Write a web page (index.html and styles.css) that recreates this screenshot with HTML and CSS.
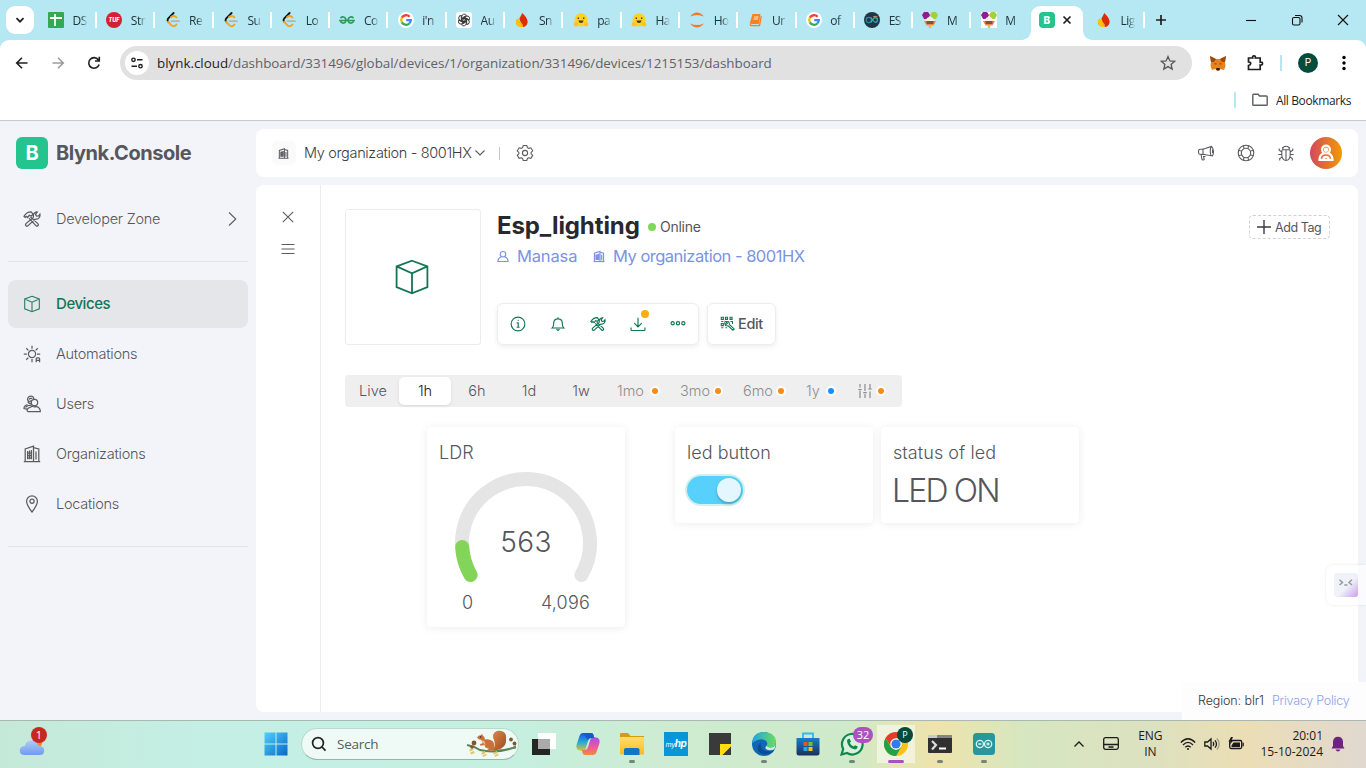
FILE: index.html
```html
<!DOCTYPE html>
<html lang="en">
<head>
<meta charset="utf-8">
<title>Blynk.Console</title>
<link rel="stylesheet" href="styles.css">
</head>
<body>
<svg class="defs" width="0" height="0">
  <defs>
    <linearGradient id="gWin" x1="0" y1="0" x2="1" y2="1"><stop offset="0" stop-color="#52d0fb"/><stop offset="1" stop-color="#0568c9"/></linearGradient>
    <linearGradient id="gEdge" x1="0" y1="0" x2="1" y2="0"><stop offset="0" stop-color="#1fa4e6"/><stop offset="1" stop-color="#6bdc5c"/></linearGradient>
    <linearGradient id="gCopA" x1="0" y1="0" x2="0" y2="1"><stop offset="0" stop-color="#1b55d6"/><stop offset=".5" stop-color="#23a8e0"/><stop offset="1" stop-color="#e8c51f"/></linearGradient>
    <linearGradient id="gCopB" x1="0" y1="0" x2="0" y2="1"><stop offset="0" stop-color="#a052e8"/><stop offset=".55" stop-color="#f0569d"/><stop offset="1" stop-color="#f58a3c"/></linearGradient>
    <linearGradient id="gFold" x1="0" y1="0" x2="0" y2="1"><stop offset="0" stop-color="#ffdc70"/><stop offset="1" stop-color="#fbb91d"/></linearGradient>
    <linearGradient id="gStore" x1="0" y1="0" x2="0" y2="1"><stop offset="0" stop-color="#1380cf"/><stop offset="1" stop-color="#1c2f5a"/></linearGradient>
    <linearGradient id="gCloud" x1="0" y1="0" x2="0" y2="1"><stop offset="0" stop-color="#aecbfa"/><stop offset="1" stop-color="#6f9bee"/></linearGradient>
    <linearGradient id="gTail" x1="0" y1="0" x2="1" y2="1"><stop offset="0" stop-color="#e28a4d"/><stop offset="1" stop-color="#9c4a1e"/></linearGradient>
  </defs>
  <symbol id="leet" viewBox="0 0 16 16"><path d="M8.600 1 3.500 6.200Q1.800 8 3.200 9.800" fill="none" stroke="#111" stroke-width="1.800" stroke-linecap="round"/><path d="M3.200 9.800 6.500 13.400Q8.800 15.400 11.400 12.600M6 5.200Q8.800 2.800 11.400 5.400" fill="none" stroke="#f5a11c" stroke-width="1.900" stroke-linecap="round"/><path d="M6.600 9.200h7.400" stroke="#b3b3b3" stroke-width="1.700" stroke-linecap="round"/></symbol>
  <symbol id="google" viewBox="0 0 16 16"><circle cx="8" cy="8" r="8" fill="#fff"/><g fill="none" stroke-width="2.300"><path d="M11.600 4.800A4.800 4.800 0 0 0 3.900 5.600" stroke="#ea4335"/><path d="M3.900 5.600a4.800 4.800 0 0 0 0 4.800" stroke="#fbbc05"/><path d="M3.900 10.400a4.800 4.800 0 0 0 7.400 1.100" stroke="#34a853"/><path d="M11.300 11.500A4.800 4.800 0 0 0 12.800 8.200H8.200" stroke="#4285f4"/></g></symbol>
  <symbol id="flame" viewBox="0 0 16 16"><path d="M8.300 1C10.600 3.400 14 6.800 13.600 10.400 13.200 13.200 11 15 8.600 15 9.600 11.400 5.800 10.400 5.400 6.400 6.400 4.800 7.600 3 8.300 1Z" fill="#dd2c00"/><path d="M2 10.500C2 8.600 3 7 4 6.400c1 3.600 6 4.600 4.600 8.600C5 15.200 2 13.600 2 10.500Z" fill="#ff9100"/><path d="M2 9.800C2.300 8.200 3 7 4 6.400c.7 3 3.800 4.500 4.300 8.600C5 15 2 13.500 2 9.800Z" fill="#ffc400"/></symbol>
  <symbol id="hug" viewBox="0 0 16 16"><circle cx="8" cy="7.800" r="6.600" fill="#ffd21e"/><circle cx="3" cy="12.300" r="2.300" fill="#ffc41c"/><circle cx="13" cy="12.300" r="2.300" fill="#ffc41c"/><path d="M5.300 5.500v1.500M10.700 5.500v1.500" stroke="#32343d" stroke-width="1.300"/><path d="M5.400 8.400h5.200Q10.200 11 8 11T5.400 8.400" fill="#4a3730"/></symbol>
  <symbol id="moz" viewBox="0 0 16 16"><path d="M0 3 2 0h4l2 3-2 4H2Z" fill="#8f1f86"/><path d="M8 3l2-3h4l2 3-2 4h-4Z" fill="#a5cf3d"/><path d="M3.500 9 5 6l3-1.500L11 6l1.500 3Z" fill="#f7efe6"/><path d="M2 9h12l-2.500 4.500h-7Z" fill="#e98a4b"/><path d="M4.500 9h7v3h-7Z" fill="#8a5033"/><path d="M8 13v3" stroke="#efb84a" stroke-width="2.500"/></symbol>
  <symbol id="cube" viewBox="0 0 18 18"><path d="M9 1.300 16.300 4v9.800L9 16.700 1.700 13.800V4ZM1.700 4 9 7.200 16.300 4M9 7.200v9.500"/></symbol>
  <symbol id="tools" viewBox="0 0 18 18"><path d="M1 6.300Q3.500 1.700 8.200 1.800L10 4.200 8.300 6 6.300 5.300 4.600 7.500 3.200 6.300 2.200 7.300ZM7.600 7 14.800 13.600Q16 15 14.700 15.900 13.500 16.500 12.600 15.400L6 8.200M10.600 7.200 3 13.600Q2 15 3.200 16 4.400 16.700 5.400 15.400L12.200 9M10.600 7.200C9.700 4.500 11.500 1.700 14.300 2L12.500 4.300 13.500 6 15.600 5.800 16.900 4.200C17.500 7.500 15 9.700 12.200 9"/></symbol>
  <symbol id="build" viewBox="0 0 18 18"><path d="M.8 16.600h16.400M2.200 16.600V4L10.500 1.200v15.400M10.500 2.600 15.800 4v12.600M4.600 6v8.200M6.500 5.500v8.700M8.400 5v9.200M13 6.500v8M4 8h5M4 10.500h5M4 13h5"/></symbol>
</svg>

<div class="browser">
  <div class="tabstrip">
    <div class="tabsearch"><svg width="10" height="10" viewBox="0 0 10 10"><path d="M1.500 3.200 5 6.700 8.500 3.200"/></svg></div>
    <div class="tabs">
      <div class="tab"><svg viewBox="0 0 16 16"><rect width="16" height="16" rx="1" fill="#34a853"/><path d="M2 6h12M7 2v12" stroke="#fff" stroke-width="1.800"/></svg><span>DS</span></div>
      <div class="tab"><svg viewBox="0 0 16 16"><circle cx="8" cy="8" r="8" fill="#d61f2f"/><text x="8" y="10.300" class="tuf">TUF</text></svg><span>Str</span></div>
      <div class="tab"><svg><use href="#leet"/></svg><span>Re</span></div>
      <div class="tab"><svg><use href="#leet"/></svg><span>Su</span></div>
      <div class="tab"><svg><use href="#leet"/></svg><span>Lo</span></div>
      <div class="tab"><svg viewBox="0 0 16 16"><path d="M1.500 6Q4 3.800 6.300 6.200 7.800 9 5.600 10.800 2.500 12 1 8.500H15Q13.500 12 10.400 10.800 8.200 9 9.700 6.200 12 3.800 14.500 6" fill="none" stroke="#2f9a55" stroke-width="1.700"/></svg><span>Co</span></div>
      <div class="tab"><svg><use href="#google"/></svg><span>i'n</span></div>
      <div class="tab"><svg viewBox="0 0 16 16"><rect width="16" height="16" rx="3" fill="#fff"/><g fill="none" stroke="#333" stroke-width=".9"><path id="petal" d="M5.800 9.300V4.600a2.500 2.500 0 0 1 4.700-1.200L6.800 5.600V8.600"/><use href="#petal" transform="rotate(60 8 8)"/><use href="#petal" transform="rotate(120 8 8)"/><use href="#petal" transform="rotate(180 8 8)"/><use href="#petal" transform="rotate(240 8 8)"/><use href="#petal" transform="rotate(300 8 8)"/></g></svg><span>Au</span></div>
      <div class="tab"><svg><use href="#flame"/></svg><span>Sn</span></div>
      <div class="tab"><svg><use href="#hug"/></svg><span>pa</span></div>
      <div class="tab"><svg><use href="#hug"/></svg><span>Ha</span></div>
      <div class="tab"><svg viewBox="0 0 16 16"><path d="M1 4.500Q8-3.300 15 4.500 8 1.300 1 4.500ZM1 11.500Q8 19.300 15 11.500 8 14.700 1 11.500Z" fill="#f37726"/></svg><span>Ho</span></div>
      <div class="tab"><svg viewBox="0 0 16 16"><path d="M4.500 2h8L10.800 12H2.800L2 10.500Z" fill="#ff7f1a"/><path d="M13.300 4 11.500 13.700H3.500Q2 13.500 2.200 11.500" fill="none" stroke="#ff7f1a" stroke-width="1.300"/><path d="M6 5h4.500M5.500 7H10" stroke="#fff0df"/></svg><span>Ur</span></div>
      <div class="tab"><svg><use href="#google"/></svg><span>of</span></div>
      <div class="tab"><svg viewBox="0 0 16 16"><circle cx="8" cy="8" r="8" fill="#213544"/><circle cx="4.800" cy="8" r="2.600" fill="none" stroke="#27929b" stroke-width="1.200"/><path d="M7 5.500q3 4.500 4 4.800 2.500 0 2.500-2.300T11 5.700Q9.500 6 7 10.400" fill="none" stroke="#33aeb5" stroke-width="1.200"/><path d="M9 5q2-1.500 4.500 0" stroke="#c99c50" fill="none"/></svg><span>ES</span></div>
      <div class="tab"><svg><use href="#moz"/></svg><span>M</span></div>
      <div class="tab last"><svg viewBox="0 0 16 16"><rect width="16" height="16" fill="#fff"/><use href="#moz"/></svg><span>M</span></div>
    </div>
    <div class="tab-active"><div class="bmini">B</div><svg width="10" height="10" viewBox="0 0 10 10"><path d="M1.500 1.500 8.500 8.500M8.500 1.500 1.500 8.500"/></svg></div>
    <div class="tab after"><svg><use href="#flame"/></svg><span>Lig</span></div>
    <svg class="plus" width="12" height="12" viewBox="0 0 12 12"><path d="M6 1v10M1 6h10"/></svg>
    <div class="winctl">
      <svg width="12" height="12" viewBox="0 0 12 12"><path d="M1 6.500h10"/></svg>
      <svg width="12" height="12" viewBox="0 0 12 12"><rect x="1.500" y="3.500" width="7.500" height="7.500" rx="1.500"/><path d="M4 1.500h4.500Q11 1.500 11 4v4.500"/></svg>
      <svg width="12" height="12" viewBox="0 0 12 12"><path d="M1 1 11 11M11 1 1 11"/></svg>
    </div>
  </div>
  <div class="chrome">
    <div class="toolbar">
      <svg class="nav" viewBox="0 0 16 16"><path d="M13.500 8H3M8 2.700 2.700 8 8 13.300"/></svg>
      <svg class="nav dim" viewBox="0 0 16 16"><path d="M2.500 8H13M8 2.700 13.300 8 8 13.300"/></svg>
      <svg class="nav" viewBox="0 0 16 16"><path d="M13.100 9.500A5.300 5.300 0 1 1 12.300 4.800L13.300 6M13.300 1.800V6H9"/></svg>
      <div class="omni">
        <div class="tune"><svg width="14" height="14" viewBox="0 0 14 14"><circle cx="3.500" cy="3.800" r="1.700"/><path d="M7 3.800h5.500M1.500 10.200H7"/><circle cx="10.500" cy="10.200" r="1.700"/></svg></div>
        <div class="url"><b>blynk.cloud</b>/dashboard/331496/global/devices/1/organization/331496/devices/1215153/dashboard</div>
        <svg class="star" width="16" height="16" viewBox="0 0 16 16"><path d="M8 1.500 9.900 5.900 14.700 6.300 11.100 9.400 12.200 14.100 8 11.600 3.800 14.100 4.900 9.400 1.300 6.300 6.100 5.900Z"/></svg>
      </div>
      <svg class="fox" width="18" height="16" viewBox="0 0 18 16"><path d="M1 1 7 4h4l6-3-1 6 .5 4-1.500 4-3.500-1-1 1.500h-3L6.500 14 3 15l-1.500-4L2 7Z" fill="#e8821e"/><path d="M1 1 7 4 5 7H2ZM17 1 11 4l2 3h3Z" fill="#9a4a14"/><path d="M7 14.300 7.500 13h3l.5 1.300-1 1.200h-2Z" fill="#2a2019"/><path d="M5.500 8.800h2M10.500 8.800h2" stroke="#7a5030" stroke-width="1.200"/></svg>
      <svg class="puzzle" width="18" height="18" viewBox="0 0 18 18"><path d="M2.500 4h4.200Q6.200 1.800 8 1.800T9.300 4h4.900v4.200Q16.500 7.800 16.500 9.500T14.200 11v4.500H2.500v-4Q4.700 11 4.700 9.500T2.500 8Z"/></svg>
      <i class="sep"></i>
      <div class="pfp">P</div>
      <svg class="dots" width="4" height="16" viewBox="0 0 4 16"><circle cx="2" cy="2.500" r="1.700"/><circle cx="2" cy="8" r="1.700"/><circle cx="2" cy="13.500" r="1.700"/></svg>
    </div>
    <div class="bookmarks"><i class="sep"></i><svg width="16" height="14" viewBox="0 0 16 14"><path d="M.8 2Q.8 1.200 1.600 1.200H6L7.500 3h6.900q.8 0 .8.800v7.600q0 .8-.8.800H1.600q-.8 0-.8-.8Z"/></svg><span>All Bookmarks</span></div>
  </div>
</div>

<div class="page">
  <aside class="side">
    <div class="brand"><div class="logo">B</div><span>Blynk.Console</span></div>
    <div class="item dev"><svg class="ic"><use href="#tools"/></svg><span>Developer Zone</span><svg class="chev" width="9" height="16" viewBox="0 0 9 16"><path d="M1 1.500 7.800 8 1 14.500"/></svg></div>
    <hr>
    <nav>
      <div class="item on"><svg class="ic"><use href="#cube"/></svg><span>Devices</span></div>
      <div class="item"><svg class="ic" viewBox="0 0 18 18"><circle cx="9" cy="9" r="3.600"/><path d="M9 .8v3M9 14v3.200M.8 9h3M14 9h3.200M3.200 3.200l2.200 2.200M14.800 3.200l-2.200 2.200M3.200 14.800l2.200-2.200M13.200 17.200v-3.500q0-.9.900-.9h1.600q.9 0 .9.900v3.500M13.200 15.300h3.400"/></svg><span>Automations</span></div>
      <div class="item"><svg class="ic" viewBox="0 0 18 18"><circle cx="11.500" cy="7.500" r="3.200"/><path d="M8.800 5.500Q5.500 7.500 4.500 4.500 5 1.200 8 1.200 10.500 1.200 11 4.200M6 4.500Q7 2.800 9.300 3.700M8.300 8.500Q5 8.500 5 6.500M4.500 9.500Q1 10.500 1 13.500L4 14.200M2.500 12.500Q4 10.200 8.800 10.200M5 16.700Q3 15 5.200 13.200L9.500 11.200Q11.500 12.500 13.500 11.400 17.500 13 17.300 16.700Z"/></svg><span>Users</span></div>
      <div class="item"><svg class="ic"><use href="#build"/></svg><span>Organizations</span></div>
      <div class="item"><svg class="ic" viewBox="0 0 18 18"><path d="M9 17Q3.600 10 3.600 6.300A5.400 5.400 0 0 1 14.400 6.300Q14.400 10 9 17Z"/><circle cx="9" cy="6.200" r="2.100"/></svg><span>Locations</span></div>
    </nav>
    <hr>
  </aside>
  <main class="main">
    <header class="top">
      <div class="orgic"><svg width="11" height="11" viewBox="0 0 18 18"><use href="#build"/></svg></div>
      <span class="org">My organization - 8001HX</span>
      <svg class="down" width="10" height="8" viewBox="0 0 10 8"><path d="M.5 1.500 5 6 9.500 1.500"/></svg>
      <i class="vbar"></i>
      <svg class="gear" width="18" height="18" viewBox="0 0 18 18"><path d="M7.200 1.500h3.600l.6 2.200 1.300.7 2.200-.6 1.800 3-1.600 1.600v1.400l1.600 1.600-1.800 3-2.200-.6-1.300.7-.6 2H7.200l-.6-2-1.300-.7-2.200.6-1.800-3 1.600-1.600V8.400L1.300 6.800l1.800-3 2.200.6 1.300-.7Z"/><circle cx="9" cy="9" r="2.600"/></svg>
      <div class="acts">
        <svg viewBox="0 0 18 18"><path d="M2 5.500 6 5v5.500L2 10Q1 7.500 2 5.500M6 5.200 14.500 2.500Q18 6 15.500 12L6 10.300M14 2.800q-1.500 4 0 9M4 10.500 5 15.500Q6.500 16.500 7.300 15.300L6.500 12.500H8.500M15.500 5.500v3.500"/></svg>
        <svg viewBox="0 0 18 18"><circle cx="9" cy="9" r="7.800"/><circle cx="9" cy="9" r="4.700"/><path d="M6.500 1.800 7 4.700M11.500 1.800 11 4.700M6.500 16.200 7 13.300M11.500 16.200 11 13.300M1.800 6.500 4.700 7M1.800 11.500 4.700 11M16.200 6.500 13.300 7M16.200 11.500 13.300 11"/></svg>
        <svg viewBox="0 0 18 18"><path d="M5.800 5.500Q5.500 2.300 9 2.300T12.200 5.500M4.800 7Q4.800 5.700 6 5.700h6q1.200 0 1.200 1.300v4.500Q12.500 16.300 9 16.500 5.500 16.300 4.800 11.500ZM9 5.700V16.500M5 3.500 6.500 4.300M13 3.500 11.500 4.300M4.800 8 2.200 6.200V4.500M13.200 8 15.800 6.200V4.500M4.800 10.500H1.300M13.200 10.500h3.500M5.200 13 2.700 14.600V16.500M12.800 13l2.500 1.600V16.500"/></svg>
        <div class="avatar"><svg width="18" height="18" viewBox="0 0 18 18"><circle cx="9" cy="5.600" r="3.900"/><circle cx="9" cy="5.800" r="1.200"/><path d="M6.500 9.500Q2.500 11 2.500 15.800H15.500Q15.500 11 11.500 9.500M6.500 15q0-2.200 2.500-2.200t2.500 2.200"/></svg></div>
      </div>
    </header>
    <section class="body">
      <div class="rail">
        <svg width="14" height="14" viewBox="0 0 14 14"><path d="M1.800 1.800 12.200 12.200M12.200 1.800 1.800 12.200"/></svg>
        <svg width="14" height="14" viewBox="0 0 14 14"><path d="M.5 2.500h13M.5 7h13M.5 11.500h13"/></svg>
      </div>
      <div class="device">
        <div class="head">
          <div class="thumb"><svg width="38" height="38"><use href="#cube"/></svg></div>
          <div class="info">
            <div class="title"><h1>Esp_lighting</h1><i></i><span>Online</span></div>
            <div class="links">
              <svg viewBox="0 0 14 14"><circle cx="7" cy="4.300" r="3.200"/><path d="M5 7.200Q1 9 1 12.800H13Q13 9 9 7.200"/></svg><span class="who">Manasa</span>
              <svg class="bl" viewBox="0 0 18 18"><use href="#build"/></svg><span>My organization - 8001HX</span>
            </div>
            <div class="btns">
              <div class="group">
                <svg viewBox="0 0 18 18"><circle cx="9" cy="9" r="7.700"/><path d="M7.500 7.700H9.200V12.500M7.500 12.700h3.300M8.700 5h1"/></svg>
                <svg viewBox="0 0 18 18"><path d="M2.500 13.500Q4.200 12 4.200 8 4.200 3.200 9 3.200T13.800 8Q13.800 12 15.500 13.500ZM7.500 14.500Q8 16.200 9 16.200T10.500 14.500M9 3V1.300"/></svg>
                <svg><use href="#tools"/></svg>
                <div class="dl"><svg viewBox="0 0 18 18"><path d="M9 2v10M4.800 8 9 12.200 13.200 8M1.200 13v2.500q0 .8.800.8h14q.8 0 .8-.8V13"/></svg><i></i></div>
                <svg viewBox="0 0 18 18"><circle cx="3" cy="8.200" r="1.800"/><circle cx="9" cy="8.200" r="1.800"/><circle cx="15" cy="8.200" r="1.800"/></svg>
              </div>
              <div class="edit"><svg viewBox="0 0 18 18"><path d="M1.500 1.500h2.500v2.500H1.500ZM6.500 1.500H9v2.500H6.500ZM12 1.500h2.500v2.500H12ZM1.500 6.500H4M1.500 9H4v2.500H1.500ZM1.500 14H4M6.500 14h2M12.500 6.500h2.500v3M6.500 6.500l4 .5 1 3.500 5.500 5-1.500 1.500-5.500-5-3.500-.5-.8-3 2 1.500 1.200-1.200Z"/></svg><span>Edit</span></div>
            </div>
          </div>
          <div class="addtag"><svg width="14" height="14" viewBox="0 0 14 14"><path d="M7 0v14M0 7h14"/></svg><span>Add Tag</span></div>
        </div>
        <div class="ranges">
          <span class="r live">Live</span><span class="r sel">1h</span><span class="r">6h</span><span class="r">1d</span><span class="r">1w</span>
          <span class="r pro mo">1mo<i></i></span><span class="r pro mo">3mo<i></i></span><span class="r pro mo">6mo<i></i></span><span class="r pro yr">1y<i class="blue"></i></span>
          <span class="r pro cus"><svg width="14" height="14" viewBox="0 0 14 14"><path d="M2 0v3.500M2 6.500V14M7 0v7M7 10v4M12 0v4.500M12 7.500V14M.3 5.500h3.400M5.300 8.700h3.400M10.300 5h3.400"/></svg><i></i></span>
        </div>
        <div class="widgets">
          <div class="w gauge">
            <h2>LDR</h2>
            <svg width="144" height="114" viewBox="0 0 144 114"><path d="M16.600 104A64 64 0 1 1 127.400 104" class="track"/><path d="M16.600 104A64 64 0 0 1 8.200 76" class="fill"/></svg>
            <div class="val">563</div>
            <div class="lims"><span>0</span><span>4,096</span></div>
          </div>
          <div class="w btn"><h2>led button</h2><div class="switch"><i></i></div></div>
          <div class="w stat"><h2>status of led</h2><div class="big">LED ON</div></div>
        </div>
      </div>
    </section>
  </main>
  <div class="bot"><div><svg width="16" height="8" viewBox="0 0 16 8"><path d="M1.500.8 4.500 3.500 1.500 6M14 .8 11 3.500 14 6M6.300 6h3.200"/></svg></div></div>
  <footer class="foot"><span>Region: blr1</span><a>Privacy Policy</a></footer>
</div>

<div class="taskbar">
  <div class="weather"><svg width="26" height="22" viewBox="0 0 26 22"><circle cx="18" cy="9" r="5" fill="#f38a1f"/><path d="M6 21Q.8 21 .8 16.500T6 12Q7 6.500 12.500 6.500T19 11.500Q25.200 11.800 25.200 16.500T20 21Z" fill="url(#gCloud)"/></svg><b>1</b></div>
  <svg class="win" width="24" height="24" viewBox="0 0 24 24"><path d="M.5.500h11v11H.5ZM12.500.500h11v11h-11ZM.5 12.500h11v11H.5ZM12.500 12.500h11v11h-11Z" fill="url(#gWin)"/></svg>
  <div class="search"><svg width="16" height="16" viewBox="0 0 16 16"><circle cx="7" cy="7" r="5.400"/><path d="M11 11 14.500 14.700"/></svg><span>Search</span>
    <svg class="squirrel" width="52" height="28" viewBox="0 0 52 28"><path d="M1 15Q8 16 14 20 30 24 50 17" fill="none" stroke="#5b8453" stroke-width="2"/><path d="M25 21 50 18.500V15Q44 20 36 19Z" fill="#5d8f62"/><path d="M5 19l2 5M17 22l2 4M29 22l2 4" stroke="#e3c463" stroke-width="4" stroke-dasharray="2 1"/><path d="M25 20C30 18 29 14 28 10 26 6 27 2 32 .8 38 0 41 4 40 9 41 15 36 20 28 20.500Z" fill="url(#gTail)"/><path d="M11 7.500Q12.500 5 15 5.300L16 3.800 17 5.800Q19.500 8 18.500 9.500 23 8.500 26.500 11 30 15 27 20.500H20.500L23 18.500Q19 18.500 18.500 15L14.500 15.800 14 14.300 17 13Q15.500 11.500 15.500 10 12 9.800 11 7.500Z" fill="#c9713a"/><path d="M15.500 10 18.500 11.500 19.500 15.500 17.500 13Z" fill="#f3c9a0"/><circle cx="14.600" cy="7" r=".7" fill="#222"/><g fill="#80552f"><circle cx="8" cy="13" r="2.400"/><circle cx="6" cy="17" r="1.800"/><circle cx="45" cy="9.500" r="1.900"/><circle cx="48.500" cy="13.500" r="1.900"/></g></svg>
  </div>
  <div class="apps">
    <div><svg viewBox="0 0 24 24"><rect x="0" y="7" width="18" height="16" fill="#252525"/><rect x="6" y="1" width="18" height="16" fill="#fff"/><rect x="6" y="7" width="12" height="10" fill="#aaa"/></svg></div>
    <div><svg viewBox="0 0 24 24"><path d="M7 1h8Q17 1 17.500 3L18 6h-3Q13 6 12 9L9.500 17Q8.500 20 6 19L2 18Q-.5 16 .8 12L3.500 4Q4.500 1 7 1Z" fill="url(#gCopA)"/><path d="M17 23H9Q7 23 6.500 21L6 18h3q2 0 3-3l2.500-8q1-2 3.500-2l4 1q2.500 2 1.200 6L20.500 20q-1 3-3.500 3Z" fill="url(#gCopB)"/><path d="M7 1h8Q17 1 17.500 3L18 6h-3Q12.500 6 12 8Z" fill="#1957c8"/></svg></div>
    <div class="run"><svg viewBox="0 0 24 24"><path d="M0 2Q0 1 1 1h7l2.500 3H24v10H0Z" fill="#d99c09"/><rect x="0" y="5" width="24" height="17.500" rx="1" fill="url(#gFold)"/><path d="M4 23v-5q0-2 2-2h11.500q2 0 2 2v5Z" fill="#1273c9"/></svg></div>
    <div><span class="hp">my<b>hp</b></span></div>
    <div><svg viewBox="0 0 24 24"><path d="M1 1h22v22H1Z" fill="#3a3a3a"/><path d="M23 12v3l-8 8h-3V12Z" fill="#ffdc13"/><path d="M23 14.500 14.500 23H23Z" fill="#3a3a3a"/></svg></div>
    <div class="run"><svg viewBox="0 0 24 24"><circle cx="12" cy="12" r="12" fill="#1267b4"/><path d="M0 11Q1 0 12 0 24 1 24 10.500 23.500 15 18.500 15.500 14.500 15.300 14.500 13.700 16.500 11 13.500 8.500 8.500 5 0 11Z" fill="url(#gEdge)"/><path d="M9 10.500Q7.500 20 18.500 19.500 20.500 19.300 22.300 18 17 24.300 9 21.500 2 17 9 10.500Z" fill="#0d4b98"/><path d="M14.700 13.800Q11.500 16.500 16 18 20 18.800 22.500 17.300L23.800 12Q22 15.500 18.500 15.500 15 15.500 14.700 13.800Z" fill="#d1eccd"/></svg></div>
    <div><svg viewBox="0 0 24 24"><path d="M7 7V1.500h10V7" fill="none" stroke="#39b7e9" stroke-width="1.800"/><path d="M.5 6h23v15q0 2.500-2.500 2.500H3Q.5 23.500.5 21Z" fill="url(#gStore)"/><path d="M7.500 10h4v4h-4Z" fill="#ef5125"/><path d="M12.500 10h4v4h-4Z" fill="#80bd2b"/><path d="M7.500 15h4v4h-4Z" fill="#2aa6e2"/><path d="M12.500 15h4v4h-4Z" fill="#fdbc13"/></svg></div>
    <div class="run"><svg viewBox="0 0 24 24"><path d="M1.500 22.500 3.200 17A10.300 10.300 0 1 1 7 21Z" fill="#d8f1dc" stroke="#12864f" stroke-width="2.200"/><path d="M8 7 9.600 6.700 11 9.600 9.800 11Q11 13.700 13.800 14.500L15 13.300 17.700 14.600Q17.600 17 15.200 17.400 8 16.300 7 9.200 7 7.800 8 7Z" fill="#12864f"/></svg><b class="b32">32</b></div>
    <div class="run cur"><svg viewBox="0 0 24 24"><circle cx="12" cy="12" r="12" fill="#fbc116"/><path d="M12 0A12 12 0 0 1 22.400 6H12L7 14.500 1.600 6A12 12 0 0 1 12 0Z" fill="#e33b2e"/><path d="M1.600 6A12 12 0 0 0 12 24L17.200 15 12 18 6.800 15Z" fill="#24a148"/><circle cx="12" cy="12" r="5.800" fill="#fff"/><circle cx="12" cy="12" r="4.600" fill="#327bea"/></svg><b class="bp">P</b></div>
    <div class="run"><svg viewBox="0 0 24 24"><rect x="0" y="3" width="24" height="18" rx="1" fill="#303030"/><path d="M0 3h24v3H0Z" fill="#858585"/><path d="M0 3h9v3H0Z" fill="#c9c9c9"/><path d="M4 9l4 4-4 4.500" fill="none" stroke="#ddd" stroke-width="2.200"/><path d="M11 16.500h7" stroke="#fff" stroke-width="2"/></svg></div>
    <div class="run"><svg viewBox="0 0 24 24"><rect x="1" y="1" width="22" height="22" rx="3.500" fill="#27979b"/><g fill="none" stroke="#d9f3f3" stroke-width="1.300"><circle cx="7.900" cy="12" r="3.600"/><circle cx="16.100" cy="12" r="3.600"/><path d="M6.300 12h3M14.500 12h3M16 10.500v3"/></g></svg></div>
  </div>
  <div class="tray">
    <svg class="up" width="12" height="8" viewBox="0 0 12 8"><path d="M1.500 6.500 6 2l4.500 4.500"/></svg>
    <svg class="kb" width="16" height="13" viewBox="0 0 16 13"><rect x=".7" y=".7" width="14.600" height="11.600" rx="1.800"/><path d="M1 7.500h14M5.500 10h5"/></svg>
    <div class="lang">ENG<br>IN</div>
    <svg width="16" height="14" viewBox="0 0 16 14"><path d="M.8 5.500Q8-2 15.200 5.500M3 8Q8 2.800 13 8M5.300 10.300Q8 7.600 10.700 10.300"/><circle cx="8" cy="12" r="1" class="f"/></svg>
    <svg width="16" height="14" viewBox="0 0 16 14"><path d="M.8 5v4H3.500L7 12V2L3.500 5ZM9 5q1.500 2 0 4M11 3.300q3 3.700 0 7.400"/><path d="M13 1.500q4.300 5.500 0 11" opacity=".35"/></svg>
    <svg width="16" height="14" viewBox="0 0 16 14"><rect x="1.700" y="3.500" width="12" height="8" rx="1.500"/><path class="f" d="M5.500 5.500h6.500v4.500H3.500V8.500ZM14.500 5.800h1.300v3.400H14.500Z"/><path class="f" d="M3 0 .5 4.500H2.500L2 7.500 5.500 3H3.700L5 0Z"/></svg>
    <div class="clock">20:01<br>15-10-2024</div>
    <svg class="bell" width="14" height="16" viewBox="0 0 14 16"><path d="M.5 12.500 2 10V5.500Q2.500.8 7 .8T12 5.500V10l1.500 2.500ZM4.500 13.500h5Q8.500 15.500 7 15.500T4.500 13.500Z"/></svg>
  </div>
</div>
</body>
</html>
```
FILE: styles.css
```css
* { box-sizing: border-box; }
body { margin: 0; width: 1366px; height: 768px; overflow: hidden; display: flex; flex-direction: column; font-family: Inter, "Liberation Sans", sans-serif; color: #55565b; }
.defs { position: absolute; }
svg { flex: none; display: block; }
h1, h2 { margin: 0; }

/* Browser frame */
.browser { height: 121px; background: #b5e8f3; font-family: "Open Sans", "Noto Sans", sans-serif; color: #1f1f1f; }
.tabstrip { height: 40px; display: flex; align-items: center; padding-left: 6px; }
.tabsearch { width: 28px; height: 28px; border-radius: 9px; background: #fff; display: grid; place-items: center; }
.tabsearch svg, .tab-active svg, .plus { fill: none; stroke: #1f1f1f; stroke-width: 1.7; }
.tabs { display: flex; margin-left: 14px; }
.tab { width: 58.3px; height: 16px; display: flex; align-items: center; flex: none; }
.tab > svg { width: 16px; height: 16px; }
.tab span { width: 16px; margin: 1px 6.500px 0 8.500px; white-space: nowrap; font-size: 12px; line-height: 18px; letter-spacing: -.5px; color: #22343a; -webkit-mask-image: linear-gradient(90deg, #000 50%, rgba(0,0,0,.1) 90%); mask-image: linear-gradient(90deg, #000 50%, rgba(0,0,0,.1) 90%); }
.tab::after { content: ""; width: 2px; height: 16px; background: #fff; flex: none; }
.tab.last { width: 50.200px; }
.tab.last::after { display: none; }
.tab.after { margin-left: 13px; width: 60px; }
.tuf { font: italic 800 5.500px Inter, sans-serif; fill: #fff; text-anchor: middle; }
.tab-active { align-self: flex-end; width: 52px; height: 34px; background: #fff; border-radius: 9px 9px 0 0; display: flex; align-items: center; padding: 0 0 6px 8px; gap: 7px; position: relative; }
.tab-active::before, .tab-active::after { content: ""; position: absolute; bottom: 0; width: 9px; height: 9px; }
.tab-active::before { left: -9px; background: radial-gradient(circle at 0 0, transparent 8.500px, #fff 9px); }
.tab-active::after { right: -9px; background: radial-gradient(circle at 100% 0, transparent 8.500px, #fff 9px); }
.bmini { width: 16px; height: 16px; border-radius: 4px; background: #23c48e; color: #fff; font: 800 10px/16px Inter, sans-serif; text-align: center; }
.plus { margin-left: -1px; }
.winctl { margin-left: auto; margin-right: 17px; display: flex; gap: 34px; }
.winctl svg { fill: none; stroke: #111; stroke-width: 1.100; }
.chrome { height: 81px; background: #fff; border-radius: 9px 9px 0 0; border-bottom: 1px solid #c9cacc; }
.toolbar { height: 46px; display: flex; align-items: center; padding-left: 14px; }
.nav { width: 16px; height: 16px; margin-right: 20px; fill: none; stroke: #1f1f1f; stroke-width: 1.600; }
.nav.dim { stroke: #9c9c9c; }
.omni { width: 1072px; height: 34px; border-radius: 17px; background: #e1e1e1; display: flex; align-items: center; padding: 0 16px 0 5px; margin-left: -2px; }
.tune { width: 24px; height: 24px; border-radius: 50%; background: #fff; display: grid; place-items: center; }
.tune svg { fill: none; stroke: #1f1f1f; stroke-width: 1.400; }
.url { margin-left: 8px; font-size: 13.400px; color: #5f6266; white-space: nowrap; letter-spacing: -.02px; }
.url b { font-weight: 400; color: #1f1f1f; }
.star { margin-left: auto; fill: none; stroke: #55585c; stroke-width: 1.300; }
.fox { margin-left: 17px; }
.puzzle { margin-left: 19px; fill: none; stroke: #1f1f1f; stroke-width: 1.700; }
.sep { width: 2px; height: 16px; background: #b5e8f3; }
.toolbar .sep { margin-left: 16px; }
.pfp { margin-left: 16px; width: 20px; height: 20px; border-radius: 50%; background: #004d40; color: #fff; font: 10px/20px Roboto, sans-serif; text-align: center; }
.dots { margin-left: 24px; }
.bookmarks { height: 28px; display: flex; align-items: center; justify-content: flex-end; padding-right: 15px; font-size: 12px; }
.bookmarks svg { margin: 0 8px 0 16px; fill: none; stroke: #5b5e62; stroke-width: 1.400; }
.bookmarks span { letter-spacing: -.38px; }

/* Console page */
.page { height: 599px; background: #f3f4f9; display: flex; position: relative; }
.page svg { fill: none; stroke: #5b5c60; stroke-width: 1.1; }
.side { width: 256px; padding: 16px 8px; font-size: 14.500px; font-weight: 300; }
.brand { height: 32px; display: flex; align-items: center; padding-left: 8px; gap: 8px; font-size: 20px; font-weight: 700; letter-spacing: -.45px; color: #56575c; }
.logo { width: 32px; height: 32px; border-radius: 6px; background: #23c48e; color: #fff; font: 700 20px/32px Inter, sans-serif; text-align: center; letter-spacing: 0; }
.item { height: 48px; border-radius: 8px; display: flex; align-items: center; padding: 0 11px 0 15px; gap: 15px; letter-spacing: -.25px; }
.item span { margin-top: -1px; }
.ic { width: 18px; height: 18px; }
.page .ic { stroke-width: 1.25; }
.dev { margin-top: 26px; }
.chev { margin-left: auto; }
.side hr { border: 0; border-top: 1px solid #e2e3e7; margin: 18px 0; }
nav { display: flex; flex-direction: column; gap: 2px; }
.item.on { background: #e5e6e9; color: #147556; font-weight: 500; font-size: 15px; letter-spacing: -.45px; }
.page .on svg { stroke: #23805f; stroke-width: 1.1; }
.main { width: 1102px; padding: 8px 0; display: flex; flex-direction: column; gap: 8px; }
.top { height: 48px; background: #fff; border-radius: 8px; display: flex; align-items: center; padding: 0 16px; color: #3a3b40; }
.orgic { width: 24px; height: 24px; border-radius: 6px; background: #fafafa; display: grid; place-items: center; }
.page .orgic svg { stroke-width: 1.700; margin-right: 1px; }
.org { margin: -1px 0 0 8px; font-size: 14.500px; font-weight: 300; letter-spacing: -.34px; width: 168px; white-space: nowrap; }
.down { margin-left: 3px; }
.vbar { margin-left: 14px; width: 1px; height: 13px; background: #c9c9cc; }
.gear { margin-left: 16px; }
.acts { margin-left: auto; display: flex; align-items: center; gap: 22px; }
.acts > svg { width: 18px; height: 18px; }
.avatar { margin-left: -7px; width: 32px; height: 32px; border-radius: 50%; background: linear-gradient(90deg, #d4475f, #f09a05); display: grid; place-items: center; }
.page .avatar svg { stroke: #fff; stroke-width: 2.200; }
.body { height: 527px; background: #fff; border-radius: 8px; display: flex; }
.rail { width: 65px; border-right: 1px solid #ececee; padding-top: 25px; display: flex; flex-direction: column; align-items: center; gap: 18px; }
.device { flex: 1; padding: 24px 28px 0 24px; }
.head { display: flex; gap: 16px; height: 136px; }
.thumb { width: 136px; height: 136px; border: 1px solid #ececec; border-radius: 3px; display: grid; place-items: center; }
.page .thumb svg { stroke: #147556; stroke-width: .85; margin: 0 2px 1px 0; }
.title { display: flex; align-items: center; height: 34px; }
.title h1 { font-size: 24px; font-weight: 700; letter-spacing: -.1px; color: #28282e; width: 143px; white-space: nowrap; margin-top: -2px; }
.title i { width: 8px; height: 8px; border-radius: 50%; background: #7fd858; margin: 2px 4px 0 8px; }
.title span { font-size: 14px; margin-top: 1px; letter-spacing: -.25px; }
.links { display: flex; align-items: center; height: 27px; color: #7b93e4; font-size: 16.500px; font-weight: 400; letter-spacing: -.5px; white-space: nowrap; }
.links span { margin-top: -1px; }
.page .links svg { width: 12px; height: 13px; stroke: #7b93e4; stroke-width: 1.300; margin-right: 8px; }
.page .links .bl { stroke-width: 1.800; }
.who { width: 60px; margin-right: 16px; letter-spacing: -.15px; }
.btns { display: flex; gap: 8px; margin-top: 33px; }
.group, .edit { height: 42px; border: 1px solid #ededed; border-radius: 6px; box-shadow: 0 2px 5px rgba(0,0,0,.07); display: flex; align-items: center; padding-bottom: 1px; }
.group { width: 202px; padding: 0 12px 1px; justify-content: space-between; }
.group svg { width: 16px; height: 16px; }
.page .group svg, .page .edit svg { stroke: #147556; stroke-width: 1.300; }
.dl { position: relative; }
.dl i { position: absolute; left: 11px; top: -6px; width: 8px; height: 8px; border-radius: 50%; background: #faad14; }
.edit { width: 69px; padding-left: 12px; gap: 3px; font-size: 14.500px; font-weight: 500; letter-spacing: -.35px; }
.edit svg { width: 15px; height: 15px; }
.addtag { margin: 6px 0 0 auto; height: 24px; width: 81px; border: 1px dashed #d2d2d2; border-radius: 4px; display: flex; align-items: center; padding-left: 7px; gap: 4px; font-size: 12.500px; font-weight: 400; letter-spacing: -.42px; white-space: nowrap; }
.page .addtag svg { stroke: #3a3b40; stroke-width: 1.400; }
.ranges { margin-top: 30px; width: 557px; height: 32px; background: #efefef; border-radius: 4px; display: flex; align-items: center; padding-left: 2px; font-size: 14.500px; font-weight: 300; white-space: nowrap; }
.r { width: 52px; height: 28px; padding-bottom: 2px; display: flex; align-items: center; justify-content: center; }
.r.sel { background: #fff; border-radius: 5px; box-shadow: 0 1px 3px rgba(0,0,0,.1); color: #222; }
.pro { color: #8d8d90; justify-content: flex-start; padding: 0 12px 2px 10px; }
.pro.mo { width: 63px; }
.pro.yr { width: 51px; padding-right: 13px; }
.pro.cus { width: 50px; padding-right: 13px; padding-left: 11px; }
.r i { width: 6px; height: 6px; border-radius: 50%; background: #fa8c16; box-shadow: 0 0 0 2px #fff; margin: 2px 0 0 auto; flex: none; }
.r i.blue { background: #1890ff; }
.page .pro svg { stroke: #8a8a8e; stroke-width: 1.200; margin-top: 2px; }
.widgets { display: grid; grid-template-columns: 240px 198px 198px; column-gap: 8px; margin: 20px 0 0 82px; align-items: start; }
.w { border-radius: 4px; background: #fff; box-shadow: 0 1px 8px rgba(0,0,0,.08); padding: 12px; height: 96px; }
.w.gauge { width: 198px; height: 200px; }
.w h2 { font-size: 18px; line-height: 27px; font-weight: 300; letter-spacing: .05px; }
.gauge > svg { margin: 5px 0 0 15px; }
.page .track, .page .fill { stroke: #e5e5e5; stroke-width: 14; stroke-linecap: round; }
.page .fill { stroke: #82d558; }
.val { margin-top: -61px; text-align: center; font-size: 28px; font-weight: 300; line-height: 36px; letter-spacing: .4px; }
.lims { display: flex; justify-content: space-between; padding: 0 23px 0 23px; margin-top: 30.500px; font-size: 18px; font-weight: 300; line-height: 24px; letter-spacing: .2px; }
.switch { width: 60px; height: 32px; margin: 8px 0 0 -2px; border-radius: 16px; background: #57d1fb; border: 2px solid #d3f0ec; display: flex; align-items: center; justify-content: flex-end; padding-right: 2px; }
.switch i { width: 24px; height: 24px; border-radius: 50%; background: #e5f7fe; box-shadow: 0 2px 3px rgba(0,35,60,.25); }
.big { font-size: 32px; font-weight: 300; line-height: 40px; margin-top: 4.500px; letter-spacing: -1.850px; margin-left: -1px; white-space: nowrap; }
.bot { position: absolute; right: 0; top: 444px; width: 40px; height: 40px; border-radius: 8px 0 0 8px; background: rgba(255,255,255,.65); box-shadow: 0 0 3px rgba(0,0,0,.1); padding: 8px; }
.bot div { width: 24px; height: 24px; border-radius: 3px; background: linear-gradient(135deg, #eff2f8 55%, #c99df0); padding: 6px 4px; }
.page .bot svg { stroke: #96999f; stroke-width: 1.500; }
.foot { position: absolute; right: 0; bottom: 0; width: 184px; height: 38px; background: #fdfdfe; padding: 0 0 2px 16px; display: flex; align-items: center; gap: 8px; font-size: 12.500px; font-weight: 300; letter-spacing: -.1px; color: #333; white-space: nowrap; }
.foot a { color: #8ba2ea; letter-spacing: -.25px; }

/* Taskbar */
.taskbar { height: 48px; padding-bottom: 2px; border-top: 1px solid #a8b9b0; background: linear-gradient(90deg, #c5e9d8 0, #c4efe5 15%, #c5efdf 38%, #cfebd0 50%, #cfeaca 62%, #efe3ab 68.500%, #d6e7c0 75%, #dce1bf 84%, #ebdeb5 91%, #e1d8d0 100%); display: flex; align-items: center; font-family: "Open Sans", "Noto Sans", sans-serif; color: #1a1a1a; }
.weather { width: 30px; height: 36px; margin: 3px 0 0 19px; padding-top: 7px; position: relative; }
.weather b { position: absolute; left: 12px; top: 0; width: 16px; height: 16px; border-radius: 50%; background: #c62a1f; color: #fff; font: 11px/16px "Open Sans", sans-serif; text-align: center; }
.win { margin-left: 214.500px; }
.search { margin-left: 13.500px; width: 218px; height: 32px; border-radius: 16px; background: #eff9f5; border: 1px solid #b9d9cd; border-bottom-color: #94b5a8; display: flex; align-items: center; padding-left: 9px; font-size: 13.500px; color: #54605c; letter-spacing: -.25px; }
.search > svg:first-child { fill: none; stroke: #222; stroke-width: 1.700; margin-right: 10px; }
.squirrel { margin-left: auto; }
.apps { display: flex; margin-left: 3px; }
.apps > div { width: 44px; height: 48px; display: flex; align-items: center; justify-content: center; position: relative; }
.apps svg { width: 24px; height: 24px; position: relative; }
.run::before { content: ""; position: absolute; left: 19px; bottom: 5px; width: 6px; height: 3px; border-radius: 2px; background: #748478; }
.cur { background: linear-gradient(rgba(255,255,255,.5), rgba(255,255,255,.5)) 3px 5px / 38px 38px no-repeat; }
.cur::before { left: 14px; width: 16px; background: #a94fc4; }
.hp { width: 24px; height: 24px; background: #0796d7; color: #fff; font: italic 7px/23px Inter, sans-serif; text-align: center; letter-spacing: -.4px; }
.hp b { font-size: 10px; }
.b32, .bp { position: absolute; top: 7px; height: 16px; border-radius: 8px; color: #fff; font: 11px/16px "Open Sans", sans-serif; text-align: center; }
.b32 { left: 23px; width: 20px; background: #ad50c2; }
.bp { left: 23px; width: 16px; background: #034a3f; font-size: 9px; }
.tray { margin-left: auto; display: flex; align-items: center; padding-right: 21px; font-size: 12px; line-height: 16px; letter-spacing: 0; white-space: nowrap; }
.tray svg { fill: none; stroke: #1a1a1a; stroke-width: 1.300; margin-right: 8px; }
.tray .f { fill: #1a1a1a; stroke: none; }
.tray .up { margin-right: 18px; }
.tray .kb { margin-right: 18px; }
.lang { width: 26px; text-align: center; margin-right: 17px; }
.clock { text-align: right; margin: 1px 8px 0 8px; }
.lang { margin-top: 1px; }
.tray .bell { margin: 0; fill: #6d2382; stroke: none; }
```
